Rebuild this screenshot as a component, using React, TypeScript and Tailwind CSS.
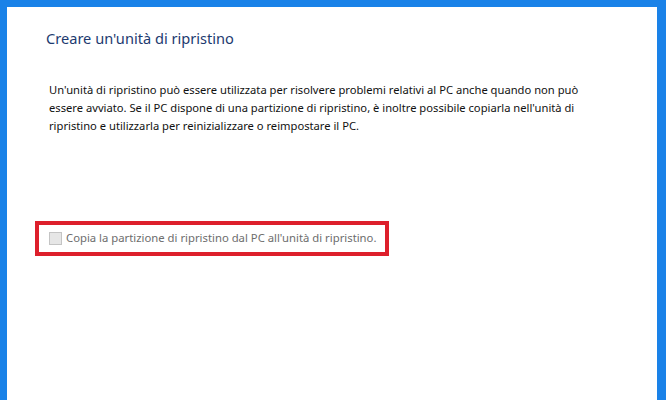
export default function App() {
  return (
    <div className="w-[666px] h-[400px] bg-[#1a82e8] pl-[7px] pt-[7px] pr-[9px] overflow-hidden">
      <div
        className="h-full bg-white pl-[39px] pt-[20px]"
        style={{ fontFamily: '"Segoe UI", "Noto Sans", "Open Sans", sans-serif' }}
      >
        <h1 className="text-[14.6px] leading-[22px] text-[#1d3a6f] font-normal">
          Creare un'unità di ripristino
        </h1>
        <div className="mt-[32px] ml-[3px] text-[11.2px] leading-[18px] text-[#111] whitespace-nowrap">
          <p>Un'unità di ripristino può essere utilizzata per risolvere problemi relativi al PC anche quando non può</p>
          <p>essere avviato. Se il PC dispone di una partizione di ripristino, è inoltre possibile copiarla nell'unità di</p>
          <p>ripristino e utilizzarla per reinizializzare o reimpostare il PC.</p>
        </div>
        <div className="mt-[86px] -ml-[11px] w-[354px] h-[35px] border-4 border-[#dd1f2b] flex items-center pl-[10px] gap-[4px]">
          <span className="shrink-0 w-[13px] h-[13px] border border-[#c4c4c4] bg-[#e6e6e6]" />
          <span className="text-[11.3px] text-[#6d6d6d] whitespace-nowrap">
            Copia la partizione di ripristino dal PC all'unità di ripristino.
          </span>
        </div>
      </div>
    </div>
  );
}
